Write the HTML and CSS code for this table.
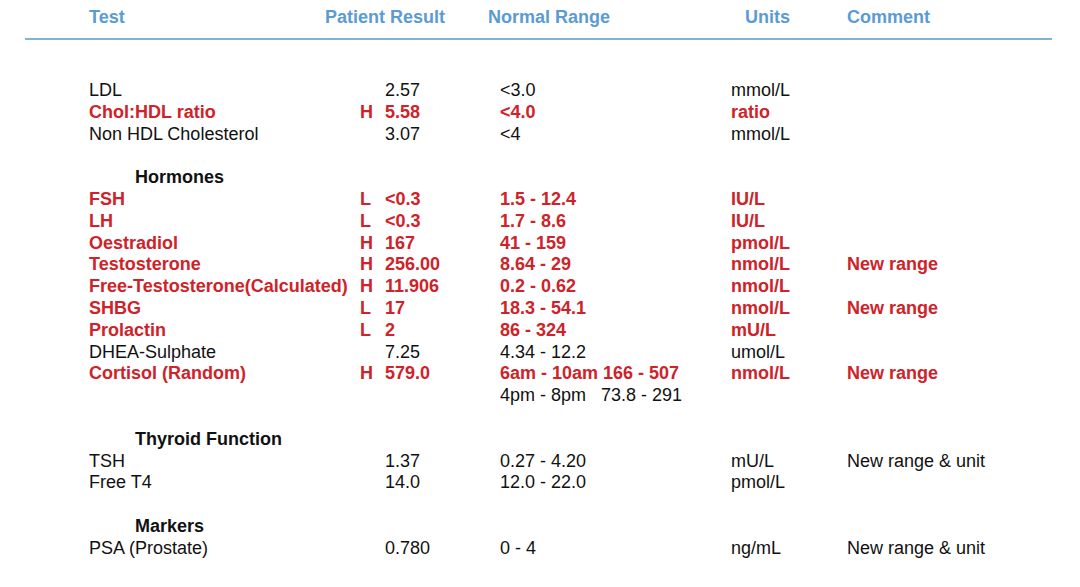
FILE: index.html
```html
<!DOCTYPE html>
<html>
<head>
<meta charset="utf-8">
<link rel="stylesheet" href="styles.css">
</head>
<body>
<div class="report">
  <div class="head">
    <div class="hcols">
      <span>Test</span><span>Patient Result</span><span>Normal Range</span><span>Units</span><span>Comment</span>
    </div>
  </div>
  <div class="rows">
    <div class="row"><span>LDL</span><span></span><span>2.57</span><span>&lt;3.0</span><span>mmol/L</span><span></span></div>
    <div class="row abn"><span>Chol:HDL ratio</span><span>H</span><span>5.58</span><span>&lt;4.0</span><span>ratio</span><span></span></div>
    <div class="row"><span>Non HDL Cholesterol</span><span></span><span>3.07</span><span>&lt;4</span><span>mmol/L</span><span></span></div>
    <div class="row blank"></div>
    <div class="row section"><span>Hormones</span></div>
    <div class="row abn"><span>FSH</span><span>L</span><span>&lt;0.3</span><span>1.5 - 12.4</span><span>IU/L</span><span></span></div>
    <div class="row abn"><span>LH</span><span>L</span><span>&lt;0.3</span><span>1.7 - 8.6</span><span>IU/L</span><span></span></div>
    <div class="row abn"><span>Oestradiol</span><span>H</span><span>167</span><span>41 - 159</span><span>pmol/L</span><span></span></div>
    <div class="row abn"><span>Testosterone</span><span>H</span><span>256.00</span><span>8.64 - 29</span><span>nmol/L</span><span>New range</span></div>
    <div class="row abn"><span>Free-Testosterone(Calculated)</span><span>H</span><span>11.906</span><span>0.2 - 0.62</span><span>nmol/L</span><span></span></div>
    <div class="row abn"><span>SHBG</span><span>L</span><span>17</span><span>18.3 - 54.1</span><span>nmol/L</span><span>New range</span></div>
    <div class="row abn"><span>Prolactin</span><span>L</span><span>2</span><span>86 - 324</span><span>mU/L</span><span></span></div>
    <div class="row"><span>DHEA-Sulphate</span><span></span><span>7.25</span><span>4.34 - 12.2</span><span>umol/L</span><span></span></div>
    <div class="row abn"><span>Cortisol (Random)</span><span>H</span><span>579.0</span><span>6am - 10am 166 - 507</span><span>nmol/L</span><span>New range</span></div>
    <div class="row"><span></span><span></span><span></span><span class="pre">4pm - 8pm   73.8 - 291</span><span></span><span></span></div>
    <div class="row blank"></div>
    <div class="row section"><span>Thyroid Function</span></div>
    <div class="row"><span>TSH</span><span></span><span>1.37</span><span>0.27 - 4.20</span><span>mU/L</span><span>New range &amp; unit</span></div>
    <div class="row"><span>Free T4</span><span></span><span>14.0</span><span>12.0 - 22.0</span><span>pmol/L</span><span></span></div>
    <div class="row blank"></div>
    <div class="row section"><span>Markers</span></div>
    <div class="row"><span>PSA (Prostate)</span><span></span><span>0.780</span><span>0 - 4</span><span>ng/mL</span><span>New range &amp; unit</span></div>
  </div>
</div>
</body>
</html>
```
FILE: styles.css
```css
html, body {
  margin: 0;
  padding: 0;
  background: #ffffff;
}
body {
  font-family: "Liberation Sans", Arial, sans-serif;
  font-size: 18px;
  color: #111111;
}
.report {
  width: 1080px;
}
.head {
  margin-left: 25px;
  width: 1027px;
  padding-top: 6px;
  height: 32px;
  border-bottom: 2px solid #82b3cf;
  box-sizing: content-box;
}
.hcols {
  display: grid;
  grid-template-columns: 236px 163px 257px 102px 1fr;
  padding-left: 64px;
  line-height: 22px;
  font-weight: bold;
  color: #5b9bd5;
}
.rows {
  margin-top: 40px;
  padding-left: 89px;
}
.row {
  display: grid;
  grid-template-columns: 271px 25px 115px 231px 116px 1fr;
  height: 21.8px;
  line-height: 21.8px;
  white-space: nowrap;
}
.row.abn {
  color: #cf2229;
  font-weight: bold;
}
.row.section {
  display: block;
  font-weight: bold;
  padding-left: 46px;
}
.pre {
  white-space: pre;
}
```
